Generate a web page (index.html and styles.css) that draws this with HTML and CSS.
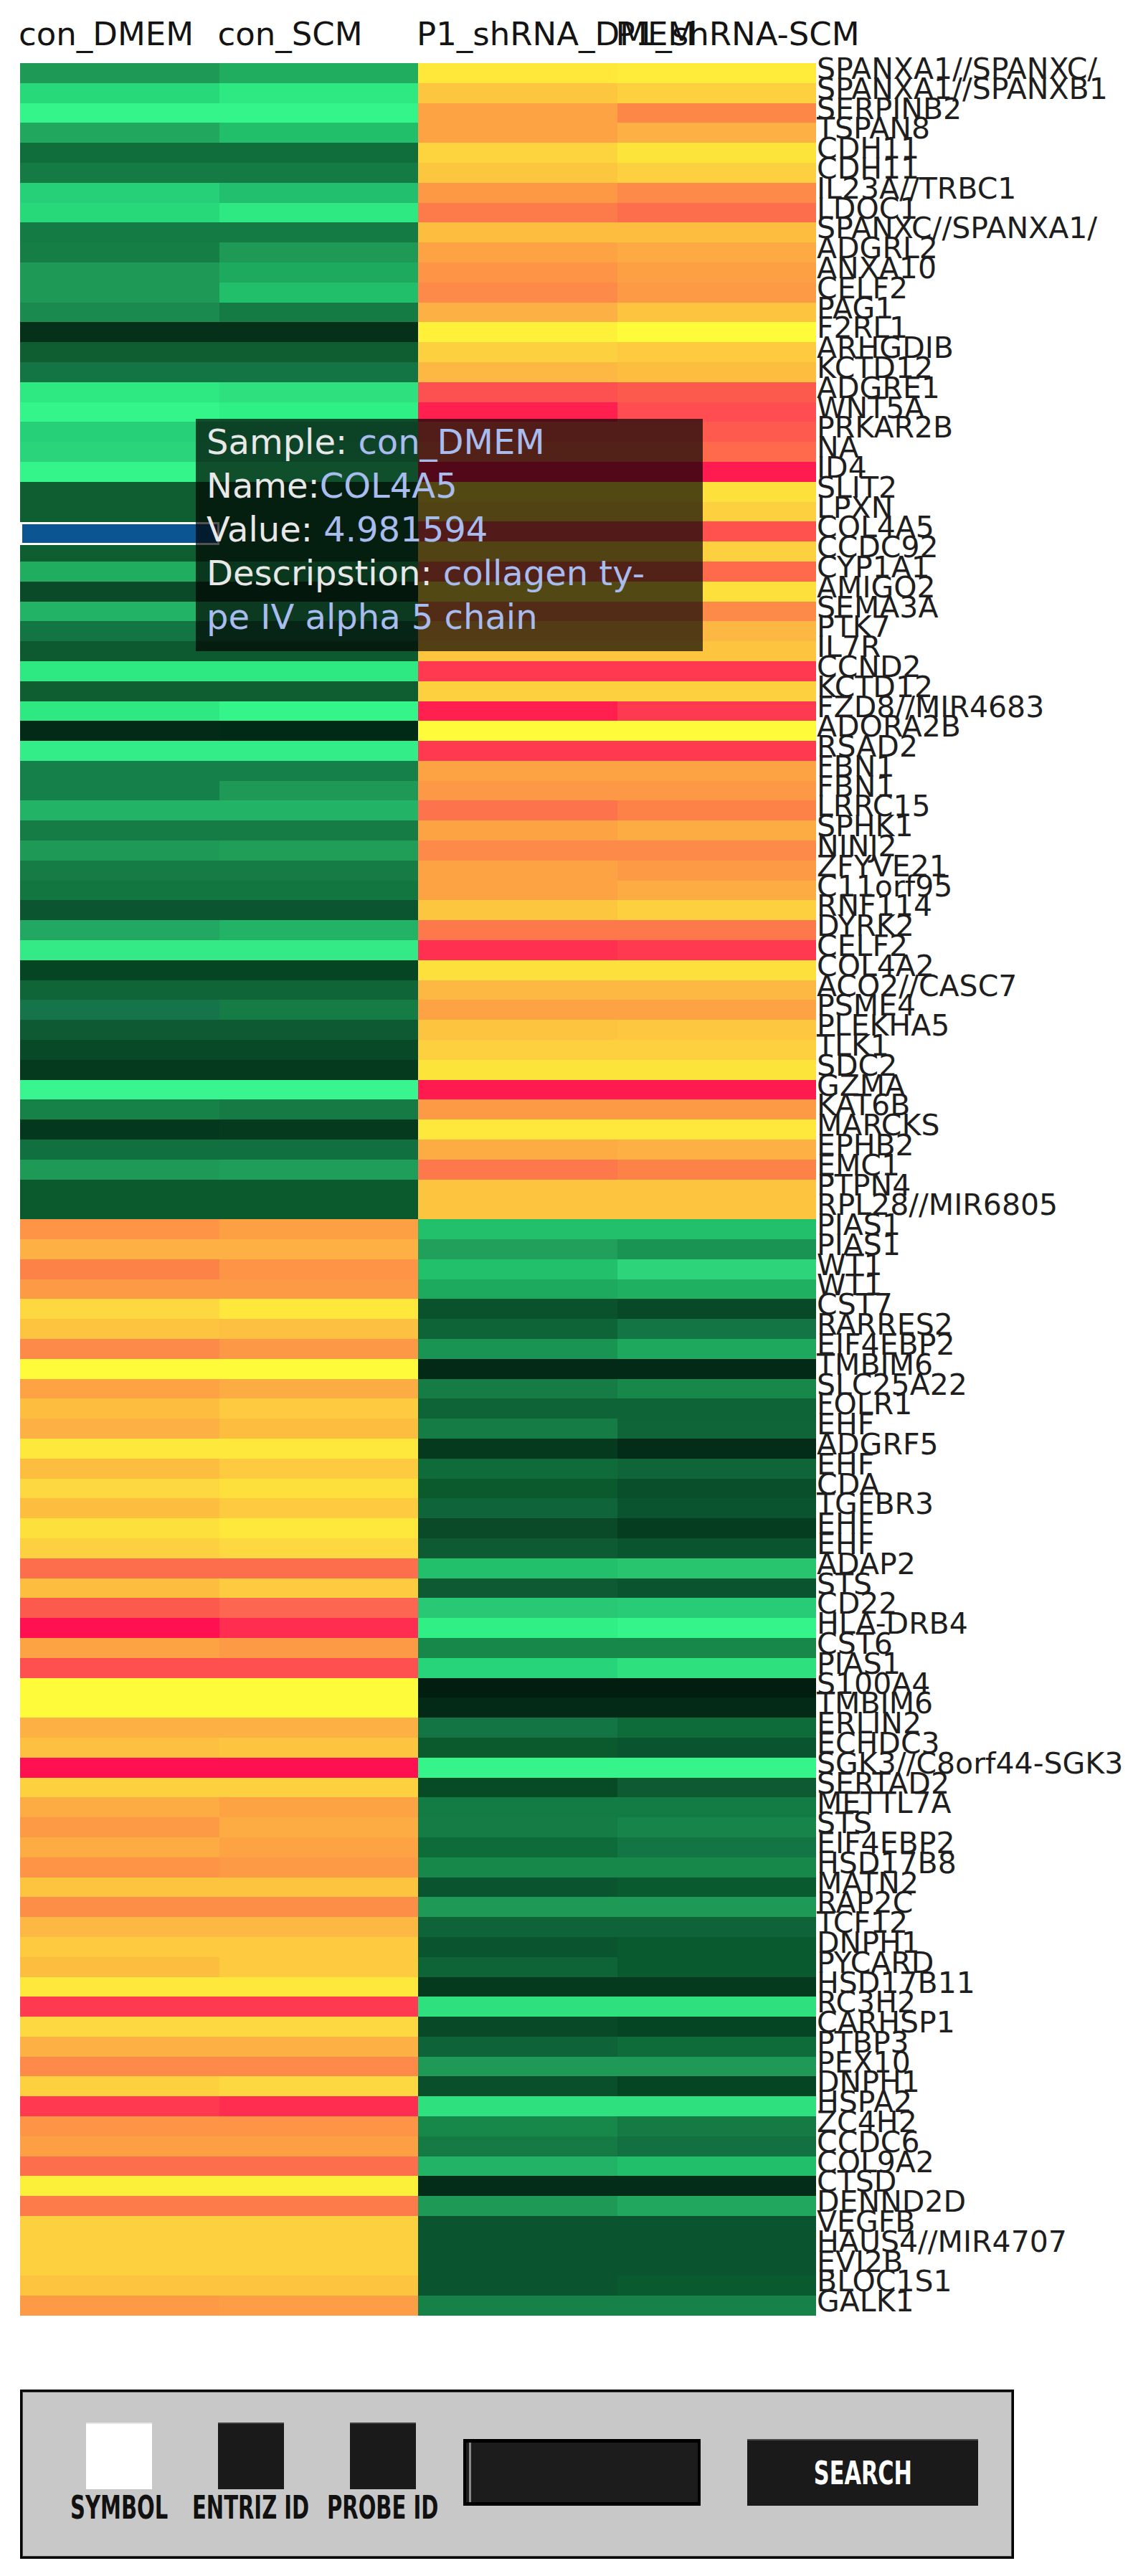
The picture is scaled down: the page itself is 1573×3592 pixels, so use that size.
FILE: index.html
```html
<!DOCTYPE html>
<html lang="en">
<head>
<meta charset="utf-8">
<title>Heatmap</title>
<link rel="stylesheet" href="styles.css">
</head>
<body>
<div class="page">
  <div class="headers">
    <span>con_DMEM</span>
    <span>con_SCM</span>
    <span>P1_shRNA_DMEM</span>
    <span>P1_shRNA-SCM</span>
  </div>
  <div class="main">
    <div class="heatmap">
      <div class="row"><i style="background:#1e9a56"></i><i style="background:#20ad5f"></i><i style="background:#ffe83a"></i><i style="background:#ffec3a"></i></div>
      <div class="row"><i style="background:#28d97a"></i><i style="background:#2ee882"></i><i style="background:#fdc63f"></i><i style="background:#fdd040"></i></div>
      <div class="row"><i style="background:#33f58a"></i><i style="background:#33f58a"></i><i style="background:#fda344"></i><i style="background:#fd8747"></i></div>
      <div class="row"><i style="background:#22a85e"></i><i style="background:#22bf6a"></i><i style="background:#fda344"></i><i style="background:#fdb043"></i></div>
      <div class="row"><i style="background:#0f6e3c"></i><i style="background:#0f6e3c"></i><i style="background:#fdd43e"></i><i style="background:#fde43b"></i></div>
      <div class="row"><i style="background:#147b44"></i><i style="background:#147b44"></i><i style="background:#fdc63f"></i><i style="background:#fdd040"></i></div>
      <div class="row"><i style="background:#26d078"></i><i style="background:#22c06e"></i><i style="background:#fd9845"></i><i style="background:#fd8a48"></i></div>
      <div class="row"><i style="background:#28d97a"></i><i style="background:#2ee882"></i><i style="background:#fd7a4b"></i><i style="background:#fd6e4c"></i></div>
      <div class="row"><i style="background:#147b44"></i><i style="background:#147b44"></i><i style="background:#fdbe40"></i><i style="background:#fdbe40"></i></div>
      <div class="row"><i style="background:#147e45"></i><i style="background:#1e9a56"></i><i style="background:#fda344"></i><i style="background:#fdaa44"></i></div>
      <div class="row"><i style="background:#1e9a56"></i><i style="background:#1eaa5e"></i><i style="background:#fd9446"></i><i style="background:#fda044"></i></div>
      <div class="row"><i style="background:#1e9a56"></i><i style="background:#22bf6a"></i><i style="background:#fd8a48"></i><i style="background:#fd9a45"></i></div>
      <div class="row"><i style="background:#1a8a4e"></i><i style="background:#147b44"></i><i style="background:#fdb043"></i><i style="background:#fdc440"></i></div>
      <div class="row"><i style="background:#053019"></i><i style="background:#053019"></i><i style="background:#fff03a"></i><i style="background:#fdfb3a"></i></div>
      <div class="row"><i style="background:#0e5e32"></i><i style="background:#0e5e32"></i><i style="background:#fdd040"></i><i style="background:#fdca40"></i></div>
      <div class="row"><i style="background:#147544"></i><i style="background:#147544"></i><i style="background:#fdb843"></i><i style="background:#fdbe40"></i></div>
      <div class="row"><i style="background:#2ee882"></i><i style="background:#2ee07e"></i><i style="background:#fd5050"></i><i style="background:#fd5a4e"></i></div>
      <div class="row"><i style="background:#33f58a"></i><i style="background:#2ef085"></i><i style="background:#ff2050"></i><i style="background:#ff4d52"></i></div>
      <div class="row"><i style="background:#26d078"></i><i style="background:#26d078"></i><i style="background:#ff5a4e"></i><i style="background:#ff5a4e"></i></div>
      <div class="row"><i style="background:#2ad47a"></i><i style="background:#2ad47a"></i><i style="background:#ff6a4c"></i><i style="background:#ff6a4c"></i></div>
      <div class="row"><i style="background:#33f58a"></i><i style="background:#33f58a"></i><i style="background:#ff1a50"></i><i style="background:#ff1a50"></i></div>
      <div class="row"><i style="background:#0e5e32"></i><i style="background:#0e5e32"></i><i style="background:#fde03c"></i><i style="background:#fde03c"></i></div>
      <div class="row"><i style="background:#0e5e32"></i><i style="background:#0e5e32"></i><i style="background:#fdd040"></i><i style="background:#fdd040"></i></div>
      <div class="row"><i style="background:#0e5e32"></i><i style="background:#0e5e32"></i><i style="background:#ff524f"></i><i style="background:#ff524f"></i></div>
      <div class="row"><i style="background:#0e5e32"></i><i style="background:#0e5e32"></i><i style="background:#fdd040"></i><i style="background:#fdd040"></i></div>
      <div class="row"><i style="background:#20ad5f"></i><i style="background:#20ad5f"></i><i style="background:#ff6a4c"></i><i style="background:#ff6a4c"></i></div>
      <div class="row"><i style="background:#0a4a28"></i><i style="background:#0a4a28"></i><i style="background:#fde03c"></i><i style="background:#fde03c"></i></div>
      <div class="row"><i style="background:#22b366"></i><i style="background:#22b366"></i><i style="background:#fd8a48"></i><i style="background:#fd8a48"></i></div>
      <div class="row"><i style="background:#147544"></i><i style="background:#147544"></i><i style="background:#fdb843"></i><i style="background:#fdb843"></i></div>
      <div class="row"><i style="background:#0d5a30"></i><i style="background:#0d5a30"></i><i style="background:#fdc440"></i><i style="background:#fdc440"></i></div>
      <div class="row"><i style="background:#2ee882"></i><i style="background:#2ee882"></i><i style="background:#ff3a50"></i><i style="background:#ff3a50"></i></div>
      <div class="row"><i style="background:#0e5e32"></i><i style="background:#0e5e32"></i><i style="background:#fdd040"></i><i style="background:#fdd040"></i></div>
      <div class="row"><i style="background:#2ee882"></i><i style="background:#33f58a"></i><i style="background:#ff2050"></i><i style="background:#ff3a50"></i></div>
      <div class="row"><i style="background:#022a16"></i><i style="background:#012a16"></i><i style="background:#fdfb3a"></i><i style="background:#fdfb3a"></i></div>
      <div class="row"><i style="background:#33ee88"></i><i style="background:#33ee88"></i><i style="background:#ff3a50"></i><i style="background:#ff3a50"></i></div>
      <div class="row"><i style="background:#15804a"></i><i style="background:#15804a"></i><i style="background:#fda344"></i><i style="background:#fda344"></i></div>
      <div class="row"><i style="background:#15804a"></i><i style="background:#1e9a56"></i><i style="background:#fd9846"></i><i style="background:#fd9846"></i></div>
      <div class="row"><i style="background:#22b366"></i><i style="background:#22b366"></i><i style="background:#fd734c"></i><i style="background:#fd8248"></i></div>
      <div class="row"><i style="background:#167c46"></i><i style="background:#167c46"></i><i style="background:#fda344"></i><i style="background:#fdac44"></i></div>
      <div class="row"><i style="background:#1e9a56"></i><i style="background:#209e58"></i><i style="background:#fd8a48"></i><i style="background:#fd8a48"></i></div>
      <div class="row"><i style="background:#147c44"></i><i style="background:#147c44"></i><i style="background:#fda344"></i><i style="background:#fd9a45"></i></div>
      <div class="row"><i style="background:#127640"></i><i style="background:#127640"></i><i style="background:#fda344"></i><i style="background:#fdac44"></i></div>
      <div class="row"><i style="background:#0b5530"></i><i style="background:#0b5530"></i><i style="background:#fdc63f"></i><i style="background:#fdd040"></i></div>
      <div class="row"><i style="background:#22a862"></i><i style="background:#22b366"></i><i style="background:#fd784b"></i><i style="background:#fd784b"></i></div>
      <div class="row"><i style="background:#33ea86"></i><i style="background:#33ea86"></i><i style="background:#ff3050"></i><i style="background:#ff3a50"></i></div>
      <div class="row"><i style="background:#064524"></i><i style="background:#064524"></i><i style="background:#fde03c"></i><i style="background:#fde03c"></i></div>
      <div class="row"><i style="background:#0f6438"></i><i style="background:#0f6438"></i><i style="background:#fdb843"></i><i style="background:#fdb843"></i></div>
      <div class="row"><i style="background:#15744a"></i><i style="background:#167c46"></i><i style="background:#fda344"></i><i style="background:#fda344"></i></div>
      <div class="row"><i style="background:#0e5a32"></i><i style="background:#0e5a32"></i><i style="background:#fdc440"></i><i style="background:#fdc83f"></i></div>
      <div class="row"><i style="background:#084a28"></i><i style="background:#084a28"></i><i style="background:#fdd040"></i><i style="background:#fdd040"></i></div>
      <div class="row"><i style="background:#063a1e"></i><i style="background:#063a1e"></i><i style="background:#fde43b"></i><i style="background:#fde43b"></i></div>
      <div class="row"><i style="background:#38f590"></i><i style="background:#38f590"></i><i style="background:#ff1a50"></i><i style="background:#ff1a50"></i></div>
      <div class="row"><i style="background:#168248"></i><i style="background:#157a44"></i><i style="background:#fd9a46"></i><i style="background:#fd9a46"></i></div>
      <div class="row"><i style="background:#04381e"></i><i style="background:#053a1e"></i><i style="background:#fde83b"></i><i style="background:#fde83b"></i></div>
      <div class="row"><i style="background:#117040"></i><i style="background:#107040"></i><i style="background:#fdac44"></i><i style="background:#fdb043"></i></div>
      <div class="row"><i style="background:#1e9a56"></i><i style="background:#1e9e58"></i><i style="background:#fd784b"></i><i style="background:#fd8248"></i></div>
      <div class="row"><i style="background:#0a5a2e"></i><i style="background:#0a5a2e"></i><i style="background:#fdc440"></i><i style="background:#fdc440"></i></div>
      <div class="row"><i style="background:#0a5a2e"></i><i style="background:#0a5a2e"></i><i style="background:#fdc440"></i><i style="background:#fdc440"></i></div>
      <div class="row"><i style="background:#fd9446"></i><i style="background:#fda044"></i><i style="background:#22c06a"></i><i style="background:#22c06a"></i></div>
      <div class="row"><i style="background:#fdb043"></i><i style="background:#fdb043"></i><i style="background:#20a05a"></i><i style="background:#1a9452"></i></div>
      <div class="row"><i style="background:#fd8248"></i><i style="background:#fd9446"></i><i style="background:#22c06a"></i><i style="background:#2ed47a"></i></div>
      <div class="row"><i style="background:#fd9a46"></i><i style="background:#fd9a46"></i><i style="background:#1eaa5e"></i><i style="background:#20b062"></i></div>
      <div class="row"><i style="background:#fdd840"></i><i style="background:#fde83b"></i><i style="background:#0a522c"></i><i style="background:#084a28"></i></div>
      <div class="row"><i style="background:#fdc440"></i><i style="background:#fdc040"></i><i style="background:#0e6436"></i><i style="background:#137544"></i></div>
      <div class="row"><i style="background:#fd8a48"></i><i style="background:#fd9846"></i><i style="background:#1a9452"></i><i style="background:#1ea85e"></i></div>
      <div class="row"><i style="background:#fdfb3a"></i><i style="background:#fdfb3a"></i><i style="background:#022a16"></i><i style="background:#022a16"></i></div>
      <div class="row"><i style="background:#fda344"></i><i style="background:#fdac44"></i><i style="background:#147c44"></i><i style="background:#17884a"></i></div>
      <div class="row"><i style="background:#fdbe40"></i><i style="background:#fdca40"></i><i style="background:#0e6436"></i><i style="background:#0e6436"></i></div>
      <div class="row"><i style="background:#fdb043"></i><i style="background:#fdbe40"></i><i style="background:#147c44"></i><i style="background:#0f6438"></i></div>
      <div class="row"><i style="background:#fde83b"></i><i style="background:#fde83b"></i><i style="background:#053a1e"></i><i style="background:#032d18"></i></div>
      <div class="row"><i style="background:#fdbe40"></i><i style="background:#fdca40"></i><i style="background:#0f6b3a"></i><i style="background:#0f6438"></i></div>
      <div class="row"><i style="background:#fdd840"></i><i style="background:#fde03c"></i><i style="background:#0a5a2e"></i><i style="background:#0a4f2c"></i></div>
      <div class="row"><i style="background:#fdbe40"></i><i style="background:#fdca40"></i><i style="background:#10643a"></i><i style="background:#0a5530"></i></div>
      <div class="row"><i style="background:#fde03c"></i><i style="background:#fde83b"></i><i style="background:#0a4a28"></i><i style="background:#053d20"></i></div>
      <div class="row"><i style="background:#fdd040"></i><i style="background:#fdd840"></i><i style="background:#0e5a32"></i><i style="background:#0a5530"></i></div>
      <div class="row"><i style="background:#fd6e4c"></i><i style="background:#fd6e4c"></i><i style="background:#22c06a"></i><i style="background:#28c46e"></i></div>
      <div class="row"><i style="background:#fdbe40"></i><i style="background:#fdca40"></i><i style="background:#0e5a32"></i><i style="background:#0a5530"></i></div>
      <div class="row"><i style="background:#fd5a4e"></i><i style="background:#fd6650"></i><i style="background:#28c874"></i><i style="background:#28cc76"></i></div>
      <div class="row"><i style="background:#ff1050"></i><i style="background:#ff2e50"></i><i style="background:#30f085"></i><i style="background:#35f58a"></i></div>
      <div class="row"><i style="background:#fda344"></i><i style="background:#fd9a46"></i><i style="background:#17884a"></i><i style="background:#17884a"></i></div>
      <div class="row"><i style="background:#ff5050"></i><i style="background:#ff5050"></i><i style="background:#28d47a"></i><i style="background:#2ee07e"></i></div>
      <div class="row"><i style="background:#fdfb3a"></i><i style="background:#fdfb3a"></i><i style="background:#021e10"></i><i style="background:#021e10"></i></div>
      <div class="row"><i style="background:#fdfb3a"></i><i style="background:#fdfb3a"></i><i style="background:#022a16"></i><i style="background:#022a16"></i></div>
      <div class="row"><i style="background:#fdb043"></i><i style="background:#fdb043"></i><i style="background:#137544"></i><i style="background:#0e6b3a"></i></div>
      <div class="row"><i style="background:#fdc040"></i><i style="background:#fdc440"></i><i style="background:#0a5a2e"></i><i style="background:#0a5530"></i></div>
      <div class="row"><i style="background:#ff1050"></i><i style="background:#ff1050"></i><i style="background:#35f58a"></i><i style="background:#35f58a"></i></div>
      <div class="row"><i style="background:#fdd040"></i><i style="background:#fdd040"></i><i style="background:#064a26"></i><i style="background:#0e5a32"></i></div>
      <div class="row"><i style="background:#fdac44"></i><i style="background:#fda344"></i><i style="background:#137c44"></i><i style="background:#137c44"></i></div>
      <div class="row"><i style="background:#fd9a46"></i><i style="background:#fdac44"></i><i style="background:#147c44"></i><i style="background:#17844a"></i></div>
      <div class="row"><i style="background:#fdac44"></i><i style="background:#fda344"></i><i style="background:#0e6b3a"></i><i style="background:#137544"></i></div>
      <div class="row"><i style="background:#fd9446"></i><i style="background:#fd9a46"></i><i style="background:#17884a"></i><i style="background:#17884a"></i></div>
      <div class="row"><i style="background:#fdc440"></i><i style="background:#fdc440"></i><i style="background:#0a5530"></i><i style="background:#0a5a30"></i></div>
      <div class="row"><i style="background:#fd8e48"></i><i style="background:#fd8e48"></i><i style="background:#1e9a56"></i><i style="background:#1e9a56"></i></div>
      <div class="row"><i style="background:#fdb843"></i><i style="background:#fdb843"></i><i style="background:#0e6438"></i><i style="background:#0e6438"></i></div>
      <div class="row"><i style="background:#fdca40"></i><i style="background:#fdca40"></i><i style="background:#0a5530"></i><i style="background:#0a5a30"></i></div>
      <div class="row"><i style="background:#fdbe40"></i><i style="background:#fdca40"></i><i style="background:#0e6436"></i><i style="background:#0a5a30"></i></div>
      <div class="row"><i style="background:#fde83b"></i><i style="background:#fde83b"></i><i style="background:#053a1e"></i><i style="background:#053a1e"></i></div>
      <div class="row"><i style="background:#ff3a50"></i><i style="background:#ff3a50"></i><i style="background:#2ee07e"></i><i style="background:#2ee07e"></i></div>
      <div class="row"><i style="background:#fdd840"></i><i style="background:#fdd840"></i><i style="background:#084a28"></i><i style="background:#064524"></i></div>
      <div class="row"><i style="background:#fdb043"></i><i style="background:#fdb043"></i><i style="background:#0e6438"></i><i style="background:#0e6b3a"></i></div>
      <div class="row"><i style="background:#fd8a48"></i><i style="background:#fd8a48"></i><i style="background:#1e9a56"></i><i style="background:#1e9a56"></i></div>
      <div class="row"><i style="background:#fdd040"></i><i style="background:#fdd840"></i><i style="background:#0a4f2c"></i><i style="background:#064524"></i></div>
      <div class="row"><i style="background:#ff3a50"></i><i style="background:#ff2e50"></i><i style="background:#2ee07e"></i><i style="background:#2ee07e"></i></div>
      <div class="row"><i style="background:#fd9446"></i><i style="background:#fd9446"></i><i style="background:#17884a"></i><i style="background:#157a44"></i></div>
      <div class="row"><i style="background:#fda044"></i><i style="background:#fda044"></i><i style="background:#157a44"></i><i style="background:#137040"></i></div>
      <div class="row"><i style="background:#fd6e4c"></i><i style="background:#fd6e4c"></i><i style="background:#22b366"></i><i style="background:#22bf6a"></i></div>
      <div class="row"><i style="background:#fdf03a"></i><i style="background:#fdf03a"></i><i style="background:#032d18"></i><i style="background:#032d18"></i></div>
      <div class="row"><i style="background:#fd7a4b"></i><i style="background:#fd7a4b"></i><i style="background:#1e9a56"></i><i style="background:#22a85e"></i></div>
      <div class="row"><i style="background:#fdd040"></i><i style="background:#fdd040"></i><i style="background:#0a5530"></i><i style="background:#0a5530"></i></div>
      <div class="row"><i style="background:#fdd040"></i><i style="background:#fdd040"></i><i style="background:#0a5530"></i><i style="background:#0a5530"></i></div>
      <div class="row"><i style="background:#fdd040"></i><i style="background:#fdd040"></i><i style="background:#0a5530"></i><i style="background:#0a5530"></i></div>
      <div class="row"><i style="background:#fdc440"></i><i style="background:#fdc440"></i><i style="background:#0a5530"></i><i style="background:#0a5a30"></i></div>
      <div class="row"><i style="background:#fd9a46"></i><i style="background:#fd9e46"></i><i style="background:#168248"></i><i style="background:#168248"></i></div>

      <div class="hover-cell"></div>
      <div class="tooltip">
        <div>Sample: <span class="v">con_DMEM</span></div>
        <div>Name:<span class="v">COL4A5</span></div>
        <div>Value: <span class="v">4.981594</span></div>
        <div>Descripstion: <span class="v">collagen ty-</span></div>
        <div><span class="v">pe IV alpha 5 chain</span></div>
      </div>
    </div>
    <div class="labels">
      <div>SPANXA1//SPANXC/</div>
      <div>SPANXA1//SPANXB1</div>
      <div>SERPINB2</div>
      <div>TSPAN8</div>
      <div>CDH11</div>
      <div>CDH11</div>
      <div>IL23A//TRBC1</div>
      <div>LDOC1</div>
      <div>SPANXC//SPANXA1/</div>
      <div>ADGRL2</div>
      <div>ANXA10</div>
      <div>CELF2</div>
      <div>PAG1</div>
      <div>F2RL1</div>
      <div>ARHGDIB</div>
      <div>KCTD12</div>
      <div>ADGRE1</div>
      <div>WNT5A</div>
      <div>PRKAR2B</div>
      <div>NA</div>
      <div>ID4</div>
      <div>SLIT2</div>
      <div>LPXN</div>
      <div>COL4A5</div>
      <div>CCDC92</div>
      <div>CYP1A1</div>
      <div>AMIGO2</div>
      <div>SEMA3A</div>
      <div>PTK7</div>
      <div>IL7R</div>
      <div>CCND2</div>
      <div>KCTD12</div>
      <div>FZD8//MIR4683</div>
      <div>ADORA2B</div>
      <div>RSAD2</div>
      <div>FBN1</div>
      <div>FBN1</div>
      <div>LRRC15</div>
      <div>SPHK1</div>
      <div>NINJ2</div>
      <div>ZFYVE21</div>
      <div>C11orf95</div>
      <div>RNF114</div>
      <div>DYRK2</div>
      <div>CELF2</div>
      <div>COL4A2</div>
      <div>ACO2//CASC7</div>
      <div>PSME4</div>
      <div>PLEKHA5</div>
      <div>TLK1</div>
      <div>SDC2</div>
      <div>GZMA</div>
      <div>KAT6B</div>
      <div>MARCKS</div>
      <div>EPHB2</div>
      <div>EMC1</div>
      <div>PTPN4</div>
      <div>RPL28//MIR6805</div>
      <div>PIAS1</div>
      <div>PIAS1</div>
      <div>WT1</div>
      <div>WT1</div>
      <div>CST7</div>
      <div>RARRES2</div>
      <div>EIF4EBP2</div>
      <div>TMBIM6</div>
      <div>SLC25A22</div>
      <div>FOLR1</div>
      <div>EHF</div>
      <div>ADGRF5</div>
      <div>EHF</div>
      <div>CDA</div>
      <div>TGFBR3</div>
      <div>EHF</div>
      <div>EHF</div>
      <div>ADAP2</div>
      <div>STS</div>
      <div>CD22</div>
      <div>HLA-DRB4</div>
      <div>CST6</div>
      <div>PIAS1</div>
      <div>S100A4</div>
      <div>TMBIM6</div>
      <div>ERLIN2</div>
      <div>ECHDC3</div>
      <div>SGK3//C8orf44-SGK3</div>
      <div>SERTAD2</div>
      <div>METTL7A</div>
      <div>STS</div>
      <div>EIF4EBP2</div>
      <div>HSD17B8</div>
      <div>MATN2</div>
      <div>RAP2C</div>
      <div>TCF12</div>
      <div>DNPH1</div>
      <div>PYCARD</div>
      <div>HSD17B11</div>
      <div>RC3H2</div>
      <div>CARHSP1</div>
      <div>PTBP3</div>
      <div>PEX10</div>
      <div>DNPH1</div>
      <div>HSPA2</div>
      <div>ZC4H2</div>
      <div>CCDC6</div>
      <div>COL9A2</div>
      <div>CTSD</div>
      <div>DENND2D</div>
      <div>VEGFB</div>
      <div>HAUS4//MIR4707</div>
      <div>EVI2B</div>
      <div>BLOC1S1</div>
      <div>GALK1</div>
    </div>
  </div>

  <div class="panel">
    <div class="opt">
      <div class="box box-on"></div>
      <span class="px-text opt-label">SYMBOL</span>
    </div>
    <div class="opt">
      <div class="box"></div>
      <span class="px-text opt-label">ENTRIZ ID</span>
    </div>
    <div class="opt">
      <div class="box"></div>
      <span class="px-text opt-label">PROBE ID</span>
    </div>
    <div class="search-input"><span class="caret"></span></div>
    <div class="search-btn"><span class="px-text">SEARCH</span></div>
  </div>
</div>
</body>
</html>
```

FILE: styles.css
```css
html, body {
  margin: 0;
  padding: 0;
  background: #ffffff;
  overflow-x: hidden;
}

body {
  font-family: "DejaVu Sans", "Liberation Sans", sans-serif;
  color: #111111;
}

.page {
  padding: 22px 0 0 28px;
}

.headers {
  display: grid;
  grid-template-columns: repeat(4, 277.5px);
  height: 52px;
  margin-bottom: 14px;
  font-size: 45px;
  line-height: 52px;
  white-space: nowrap;
  color: #141414;
}

.headers span {
  display: block;
  margin-left: -2px;
}

.main {
  display: flex;
  align-items: flex-start;
}

.heatmap {
  position: relative;
  flex: none;
  display: grid;
  grid-template-columns: repeat(4, 277.5px);
  grid-auto-rows: 27.8px;
}

.row {
  display: contents;
}

.row i {
  display: block;
}

.hover-cell {
  position: absolute;
  left: 0;
  top: 639.5px;
  width: 277.5px;
  height: 32.5px;
  box-sizing: border-box;
  border: 3px solid #ffffff;
  background: #0b5592;
}

.tooltip {
  position: absolute;
  left: 245px;
  top: 496px;
  width: 707px;
  height: 324px;
  box-sizing: border-box;
  padding: 2px 0 0 15px;
  background: rgba(0, 0, 0, 0.68);
  color: #e8e8e8;
  font-size: 48px;
  line-height: 61px;
  white-space: nowrap;
}

.tooltip .v {
  color: #a9bcee;
}

.labels {
  flex: 1;
  min-width: 0;
  margin-top: -5px;
  padding-left: 1px;
  font-size: 41px;
  line-height: 27.8px;
  white-space: nowrap;
  color: #1e1e1e;
}

.labels div {
  height: 27.8px;
}

.panel {
  display: flex;
  align-items: flex-start;
  box-sizing: border-box;
  width: 1386px;
  height: 236px;
  margin-top: 103px;
  padding: 43px 0 0 43px;
  border: 3px solid #000000;
  box-shadow: inset 0 0 0 1px #4a4a4a;
  background: #c8c8c8;
}

.opt {
  width: 184px;
  display: flex;
  flex-direction: column;
  align-items: center;
}

.box {
  width: 92px;
  height: 93px;
  box-sizing: border-box;
  background: #1a1a1a;
  border-top: 2px solid #3c3c3c;
}

.box-on {
  background: #ffffff;
  border-top-color: #e6e6e6;
}

.px-text {
  display: inline-block;
  font-size: 44px;
  line-height: 44px;
  font-weight: bold;
  white-space: nowrap;
  transform: scaleX(0.66);
}

.opt-label {
  margin-top: 4px;
  color: #111111;
}

.search-input {
  display: flex;
  box-sizing: border-box;
  width: 331px;
  height: 93px;
  margin: 23px 0 0 20px;
  padding: 0 0 0 4px;
  border: 4px solid #000000;
  border-top-width: 5px;
  border-bottom-width: 5px;
  background: #1c1c1c;
}

.caret {
  width: 3px;
  background: #8a8a8a;
}

.search-btn {
  display: flex;
  align-items: center;
  justify-content: center;
  box-sizing: border-box;
  width: 322px;
  height: 93px;
  margin: 23px 0 0 65px;
  background: #1a1a1a;
  border-top: 2px solid #4a4a4a;
  color: #ffffff;
}

.search-btn .px-text {
  transform: scaleX(0.69);
}
```
